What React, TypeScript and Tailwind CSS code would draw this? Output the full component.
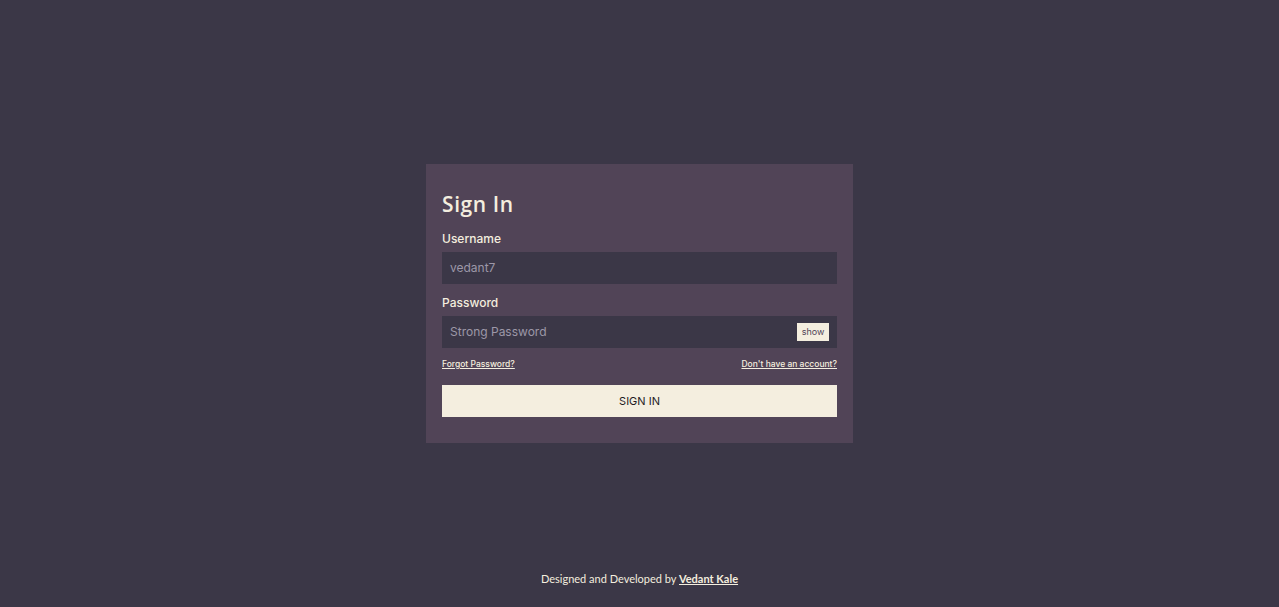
import React from "react";

export default function App() {
  return (
    <div className="w-full h-[607px] bg-[#3b3747] flex flex-col items-center font-['Open_Sans',sans-serif]">
      <div className="mt-[164px] w-[427px] bg-[#514457] px-4 pt-[23px] pb-[26px] flex flex-col">
        <h1 className="text-[21px] leading-[34px] font-semibold tracking-[0.6px] text-[#f4eedf]">Sign In</h1>
        <label className="mt-[10px] text-[12px] leading-[16px] text-[#f4eedf] font-medium font-['Inter',sans-serif]">Username</label>
        <div className="mt-[5px] h-[32px] bg-[#3b3747] flex items-center px-2">
          <span className="text-[12px] text-[#9d97a8] font-['Inter',sans-serif]">vedant7</span>
        </div>
        <label className="mt-[11px] text-[12px] leading-[16px] text-[#f4eedf] font-medium font-['Inter',sans-serif]">Password</label>
        <div className="mt-[5px] h-[32px] bg-[#3b3747] flex items-center justify-between pl-2 pr-[8px]">
          <span className="text-[12px] text-[#9d97a8] font-['Inter',sans-serif]">Strong Password</span>
          <span className="h-[18px] w-[32px] bg-[#f4eedf] text-[#514457] text-[9px] flex items-center justify-center font-['Inter',sans-serif]">show</span>
        </div>
        <div className="mt-[10px] flex justify-between text-[8.5px] leading-[12px] text-[#f4eedf] underline font-medium font-['Inter',sans-serif]">
          <span>Forgot Password?</span>
          <span>Don't have an account?</span>
        </div>
        <div className="mt-[15px] h-[32px] bg-[#f4eedf] flex items-center justify-center text-[11px] text-[#1f1b24] font-['Inter',sans-serif]">
          SIGN IN
        </div>
      </div>
      <div className="mt-[128px] text-[11px] text-[#f4eedf] font-['Lato',sans-serif]">
        Designed and Developed by <span className="font-bold underline">Vedant Kale</span>
      </div>
    </div>
  );
}
